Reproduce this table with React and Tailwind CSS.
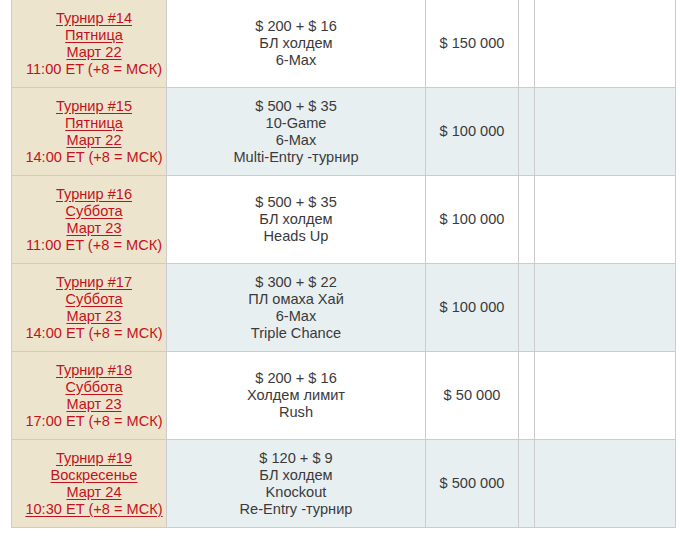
import React from "react";

const rows = [
  { n: 14, day: "Пятница", date: "Март 22", time: "11:00 ET (+8 = МСК)", info: ["$ 200 + $ 16", "БЛ холдем", "6-Max"], prize: "$ 150 000" },
  { n: 15, day: "Пятница", date: "Март 22", time: "14:00 ET (+8 = МСК)", info: ["$ 500 + $ 35", "10-Game", "6-Max", "Multi-Entry -турнир"], prize: "$ 100 000" },
  { n: 16, day: "Суббота", date: "Март 23", time: "11:00 ET (+8 = МСК)", info: ["$ 500 + $ 35", "БЛ холдем", "Heads Up"], prize: "$ 100 000" },
  { n: 17, day: "Суббота", date: "Март 23", time: "14:00 ET (+8 = МСК)", info: ["$ 300 + $ 22", "ПЛ омаха Хай", "6-Max", "Triple Chance"], prize: "$ 100 000" },
  { n: 18, day: "Суббота", date: "Март 23", time: "17:00 ET (+8 = МСК)", info: ["$ 200 + $ 16", "Холдем лимит", "Rush"], prize: "$ 50 000" },
  { n: 19, day: "Воскресенье", date: "Март 24", time: "10:30 ET (+8 = МСК)", info: ["$ 120 + $ 9", "БЛ холдем", "Knockout", "Re-Entry -турнир"], prize: "$ 500 000", linkTime: true },
];

const App = () => {
  return (
    <div className="w-[680px] h-[536px] bg-white font-['Liberation_Sans',Arial,sans-serif] text-[14.6px] leading-[17px] text-[#3a3a3a]">
      <div className="ml-[11px] w-[665px] border-l border-r border-[#cccccc]">
        {rows.map((row, i) => (
          <div
            key={row.n}
            className={`flex h-[88px] border-b border-[#cccccc] ${i % 2 === 1 ? "bg-[#e8eff1]" : "bg-white"}`}
          >
            {/* tournament name / date */}
            <div className="w-[155px] shrink-0 flex flex-col items-center justify-center pl-[10px] bg-[#ede4cd] border-r border-[#cccccc] text-[#c3121b] text-center whitespace-nowrap">
              <a href="#" className="underline underline-offset-2">Турнир #{row.n}</a>
              <a href="#" className="underline underline-offset-2">{row.day}</a>
              <a href="#" className="underline underline-offset-2">{row.date}</a>
              {row.linkTime ? (
                <a href="#" className="underline underline-offset-2">{row.time}</a>
              ) : (
                <span>{row.time}</span>
              )}
            </div>
            {/* buy-in / game */}
            <div className="w-[259px] shrink-0 flex flex-col items-center justify-center border-r border-[#cccccc] text-center">
              {row.info.map((line, k) => (
                <span key={k}>{line}</span>
              ))}
            </div>
            {/* prize */}
            <div className="w-[93px] shrink-0 flex items-center justify-center border-r border-[#cccccc]">
              {row.prize}
            </div>
            <div className="w-[16px] shrink-0 border-r border-[#cccccc]"></div>
            <div className="flex-1"></div>
          </div>
        ))}
      </div>
    </div>
  );
};

export default App;
